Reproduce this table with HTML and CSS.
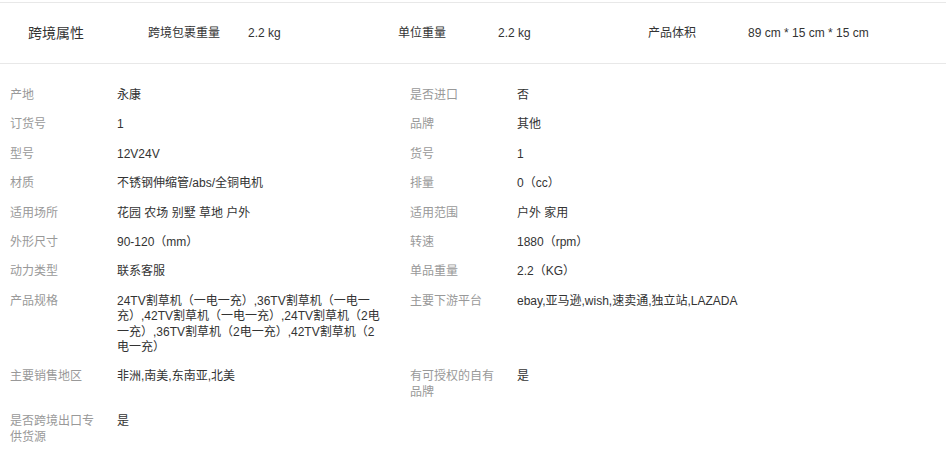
FILE: index.html
```html
<!DOCTYPE html>
<html lang="zh-CN">
<head>
    <meta charset="UTF-8">
    <meta name="viewport" content="width=device-width, initial-scale=1.0">
    <link rel="stylesheet" href="styles.css">
</head>
<body>
    <div class="attrs">
        <div class="cross">
            <div class="cross-title">跨境属性</div>
            <div class="cross-item">
                <span class="cross-label">跨境包裹重量</span>
                <span class="cross-value">2.2 kg</span>
            </div>
            <div class="cross-item">
                <span class="cross-label">单位重量</span>
                <span class="cross-value">2.2 kg</span>
            </div>
            <div class="cross-item">
                <span class="cross-label">产品体积</span>
                <span class="cross-value">89 cm * 15 cm * 15 cm</span>
            </div>
        </div>

        <div class="props">
            <div class="prop"><div class="prop-name">产地</div><div class="prop-value">永康</div></div>
            <div class="prop"><div class="prop-name">是否进口</div><div class="prop-value">否</div></div>
            <div class="prop"><div class="prop-name">订货号</div><div class="prop-value">1</div></div>
            <div class="prop"><div class="prop-name">品牌</div><div class="prop-value">其他</div></div>
            <div class="prop"><div class="prop-name">型号</div><div class="prop-value">12V24V</div></div>
            <div class="prop"><div class="prop-name">货号</div><div class="prop-value">1</div></div>
            <div class="prop"><div class="prop-name">材质</div><div class="prop-value">不锈钢伸缩管/abs/全铜电机</div></div>
            <div class="prop"><div class="prop-name">排量</div><div class="prop-value">0（cc）</div></div>
            <div class="prop"><div class="prop-name">适用场所</div><div class="prop-value">花园 农场 别墅 草地 户外</div></div>
            <div class="prop"><div class="prop-name">适用范围</div><div class="prop-value">户外 家用</div></div>
            <div class="prop"><div class="prop-name">外形尺寸</div><div class="prop-value">90-120（mm）</div></div>
            <div class="prop"><div class="prop-name">转速</div><div class="prop-value">1880（rpm）</div></div>
            <div class="prop"><div class="prop-name">动力类型</div><div class="prop-value">联系客服</div></div>
            <div class="prop"><div class="prop-name">单品重量</div><div class="prop-value">2.2（KG）</div></div>
            <div class="prop"><div class="prop-name">产品规格</div><div class="prop-value">24TV割草机（一电一充）,36TV割草机（一电一充）,42TV割草机（一电一充）,24TV割草机（2电一充）,36TV割草机（2电一充）,42TV割草机（2电一充）</div></div>
            <div class="prop"><div class="prop-name">主要下游平台</div><div class="prop-value">ebay,亚马逊,wish,速卖通,独立站,LAZADA</div></div>
            <div class="prop"><div class="prop-name">主要销售地区</div><div class="prop-value">非洲,南美,东南亚,北美</div></div>
            <div class="prop"><div class="prop-name">有可授权的自有品牌</div><div class="prop-value">是</div></div>
            <div class="prop"><div class="prop-name">是否跨境出口专供货源</div><div class="prop-value">是</div></div>
        </div>
    </div>
</body>
</html>
```

FILE: styles.css
```css
body {
    margin: 0;
    font-family: "Liberation Sans", Arial, "Noto Sans CJK SC", sans-serif;
    font-size: 12px;
    color: #333;
    background: #fff;
}

.attrs {
    padding-top: 2px;
}

/* cross-border strip */
.cross {
    display: flex;
    align-items: center;
    height: 60px;
    padding-left: 28px;
    line-height: 16px;
    border-top: 1px solid #e8e8e8;
    border-bottom: 1px solid #e8e8e8;
}

.cross-title {
    width: 120px;
    font-size: 14px;
    color: #333;
}

.cross-item {
    display: flex;
    align-items: center;
    width: 250px;
}

.cross-label {
    width: 100px;
    color: #333;
}

.cross-value {
    color: #333;
}

/* property table */
.props {
    display: grid;
    grid-template-columns: 400px 400px;
    padding-top: 17px;
}

.prop {
    display: grid;
    grid-template-columns: 117px 266px;
    padding: 7px 0;
    line-height: 15.4px;
}

.prop-name {
    padding: 0 20px 0 10px;
    color: #999;
}

.prop-value {
    color: #333;
    word-break: break-all;
}
```
